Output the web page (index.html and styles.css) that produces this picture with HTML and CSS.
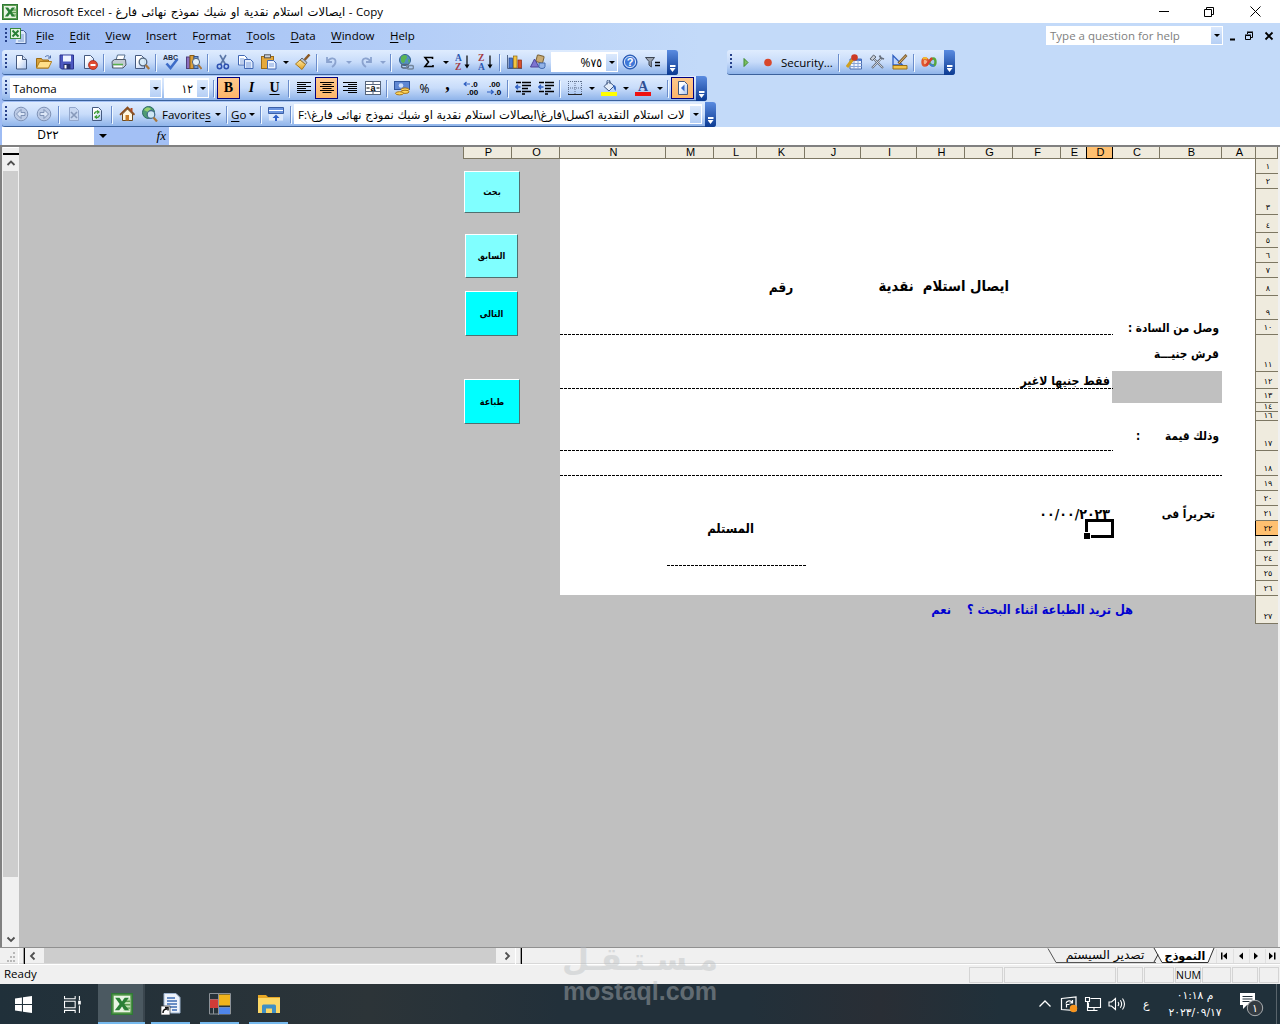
FILE: index.html
```
<!DOCTYPE html>
<html>
	<head>
		<meta charset="utf-8">
		<title>Microsoft Excel</title>
		<link rel="stylesheet" href="styles.css">
	</head>
	<body>

		<!-- icons -->
		<svg class="defs">
			<linearGradient id="paper" x1="0" y1="0" x2="1" y2="1"><stop offset="0.3" stop-color="#ffffff"/><stop offset="1" stop-color="#a9c4f0"/></linearGradient>
			<linearGradient id="gold" x1="0" y1="0" x2="0" y2="1"><stop offset="0" stop-color="#ffe9a0"/><stop offset="1" stop-color="#e0a020"/></linearGradient>
		</svg>
		<svg class="sprite">
			<symbol id="excel" viewBox="0 0 16 16"><rect x="0.5" y="0.5" width="15" height="15" fill="#5d9c50" stroke="#2f7a35"/><rect x="2" y="2" width="12" height="12" fill="#e9f4e4"/><path d="M9 4h5v9H9z" fill="#bfe0b5"/><path d="M9 6h5M9 8.500h5M9 11h5" stroke="#5d9c50"/><path d="M3 3.500h3.200l1.800 2.600 2-2.600h3L9.600 8l3.600 4.500H10L8 9.800l-2 2.700H2.800L6.300 8z" fill="#2a7f36"/></symbol>
			<symbol id="book" viewBox="0 0 17 16"><path d="M7.500 2.500h6l2.500 2.500v10.500H5.500" fill="#dce8fb" stroke="#3f5c94"/><path d="M10 7h4M10 9h4M10 11h4M8 13h6" stroke="#7b9bd0"/><rect x="0.500" y="0.500" width="10" height="10" fill="#e3f3de" stroke="#3b8a3c"/><path d="M2.500 2.500l6 6M8.500 2.500l-6 6" stroke="#2a7f36" stroke-width="2"/></symbol>
			<symbol id="new" viewBox="0 0 16 16"><path d="M3.500 1.500h6l4 4v9.500h-10z" fill="url(#paper)" stroke="#44597f"/><path d="M9.500 1.500v4h4" fill="#d5e2f7" stroke="#44597f"/></symbol>
			<symbol id="open" viewBox="0 0 16 16"><path d="M0.500 14V4.500h5l1 1.500h6v8z" fill="#d9a23a" stroke="#9a6b14"/><path d="M0.500 14l3.200-6.500h12L12.500 14z" fill="#ffe08a" stroke="#b07d1c"/><path d="M9 3c2-2 4-1.500 5 0.500M14.500 1.500v2.500H12" fill="none" stroke="#4a6ba8"/></symbol>
			<symbol id="save" viewBox="0 0 16 16"><path d="M1 1h13.500v14H2.500L1 13.500z" fill="#4c58c0" stroke="#2b3290"/><rect x="4" y="1.500" width="8" height="6" fill="#eef3ff"/><rect x="4.500" y="10" width="7" height="5" fill="#26306e"/><rect x="5.500" y="11" width="2" height="3.500" fill="#ffffff"/></symbol>
			<symbol id="perm" viewBox="0 0 16 16"><path d="M2.500 1.500h6l3 3v10h-9z" fill="url(#paper)" stroke="#44597f"/><circle cx="11" cy="11" r="4.500" fill="#e04a32" stroke="#9c2415" stroke-width="0.700"/><path d="M8.500 11h5" stroke="#fff" stroke-width="2"/></symbol>
			<symbol id="print" viewBox="0 0 16 16"><path d="M5 6l1.500-5H14l-1.500 5z" fill="#fff" stroke="#56708f"/><path d="M1 7.500L3.500 5.500h11L15 11l-3 3H1.500z" fill="#c3cbd4" stroke="#4f5a6a"/><path d="M2 10.500h10" stroke="#57b04a" stroke-width="1.500"/><path d="M3 12.500h8" stroke="#fff" stroke-width="1.500"/></symbol>
			<symbol id="preview" viewBox="0 0 16 16"><path d="M1.500 1.500h6l3 3v10h-9z" fill="url(#paper)" stroke="#44597f"/><circle cx="9" cy="8" r="3.800" fill="#d8ecfa" fill-opacity="0.900" stroke="#53677f" stroke-width="1.300"/><path d="M11.700 11l3.500 4" stroke="#a8763a" stroke-width="2.200"/></symbol>
			<symbol id="spell" viewBox="0 0 16 16"><text x="0" y="6" font-family="Liberation Sans" font-size="7" font-weight="bold" textLength="15" fill="#222c40">ABC</text><path d="M3.500 9.500l4 4.500L14.500 5" fill="none" stroke="#3d6cc8" stroke-width="2.600"/></symbol>
			<symbol id="research" viewBox="0 0 16 16"><rect x="0.500" y="3" width="3.500" height="11.500" fill="#8a6fc0" stroke="#50407c"/><rect x="4" y="1.500" width="4" height="13" fill="#d9a03c" stroke="#8a5c14"/><rect x="8" y="2.500" width="4" height="12" fill="#6f9ad6" stroke="#35548c"/><circle cx="10" cy="8" r="3.600" fill="#e3f1fb" stroke="#53677f"/><path d="M12.500 11l3 4" stroke="#a8763a" stroke-width="2"/></symbol>
			<symbol id="cut" viewBox="0 0 16 16"><path d="M5 1l5.500 9.500M11 1L5.500 10.500" stroke="#5c78a8" stroke-width="1.600"/><circle cx="4.500" cy="12.500" r="2.200" fill="none" stroke="#2c4fb0" stroke-width="1.500"/><circle cx="11.300" cy="12.500" r="2.200" fill="none" stroke="#2c4fb0" stroke-width="1.500"/></symbol>
			<symbol id="copy" viewBox="0 0 16 16"><path d="M0.500 1.500h6l2.500 2.500v7H0.500z" fill="#fff" stroke="#4268b4"/><path d="M6.500 5.500h6l2.500 2.500v6.500H6.500z" fill="#e2ecfc" stroke="#4268b4"/><path d="M2 5h4M2 7h4M2 9h4M8 9h5M8 11h5M8 13h5" stroke="#7fa0dc"/></symbol>
			<symbol id="paste" viewBox="0 0 16 16"><rect x="0.500" y="2.500" width="12" height="12" fill="#e5a93c" stroke="#9a6a17"/><rect x="3.500" y="0.800" width="6" height="3" fill="#cdd3dc" stroke="#555"/><path d="M6.500 6.500h6l2.500 2.500v6H6.500z" fill="#eef4ff" stroke="#4268b4"/><path d="M8 10h5M8 12h5" stroke="#7fa0dc"/></symbol>
			<symbol id="painter" viewBox="0 0 16 16"><path d="M14.500 0.500L9.500 6" stroke="#8b5a24" stroke-width="2.500"/><path d="M7 4l5 4.500-1.500 2L5 6z" fill="#b8bfca" stroke="#5f6b7c"/><path d="M5 6l5.500 4.500L7 15.500 0.500 10z" fill="url(#gold)" stroke="#a8791e"/></symbol>
			<symbol id="undo" viewBox="0 0 16 16"><path d="M3 3v5h5M3.500 7.500C6 3 12 3.500 11.500 8c0 2.500-2 4-3.500 5" fill="none" stroke="#8ba3cf" stroke-width="1.800"/></symbol>
			<symbol id="redo" viewBox="0 0 16 16"><path d="M13 3v5H8M12.500 7.500C10 3 4 3.500 4.500 8c0 2.500 2 4 3.500 5" fill="none" stroke="#8ba3cf" stroke-width="1.800"/></symbol>
			<symbol id="link" viewBox="0 0 16 16"><circle cx="7" cy="6" r="5.500" fill="#5390c0" stroke="#2f6090"/><path d="M3 3c3-3 6-2 6 0s-2 2-2 4-3 3-4 0zM10 5l2 1-1 4z" fill="#5ab551"/><rect x="3.500" y="10.500" width="7" height="3.500" rx="1.700" fill="none" stroke="#56677c" stroke-width="1.400"/><rect x="8.500" y="11.500" width="7" height="3.500" rx="1.700" fill="none" stroke="#74869c" stroke-width="1.400"/></symbol>
			<symbol id="sum" viewBox="0 0 16 16"><path d="M11.500 5V3.500H4l3.500 4.500L4 12.500h8V11" fill="none" stroke="#000" stroke-width="1.600"/></symbol>
			<symbol id="az" viewBox="0 0 16 16"><g font-family="Liberation Serif" font-size="9.500" font-weight="bold"><text x="0" y="7" fill="#2c57b0">A</text><text x="0" y="15.500" fill="#a33a44">Z</text></g><path d="M12 1.500v11" stroke="#000" stroke-width="1.200"/><path d="M9.500 10.500h5L12 14.500z"/></symbol>
			<symbol id="za" viewBox="0 0 16 16"><g font-family="Liberation Serif" font-size="9.500" font-weight="bold"><text x="0" y="7" fill="#a33a44">Z</text><text x="0" y="15.500" fill="#2c57b0">A</text></g><path d="M12 1.500v11" stroke="#000" stroke-width="1.200"/><path d="M9.500 10.500h5L12 14.500z"/></symbol>
			<symbol id="chart" viewBox="0 0 16 16"><path d="M0.500 1v13.500H15" fill="none" stroke="#50658a"/><rect x="2" y="4" width="3.500" height="10" fill="#4a78d0" stroke="#26468a" stroke-width="0.700"/><rect x="6.500" y="2" width="3.500" height="12" fill="#f4c440" stroke="#8f6810" stroke-width="0.700"/><rect x="11" y="6" width="3.500" height="8" fill="#d8502c" stroke="#8c2810" stroke-width="0.700"/></symbol>
			<symbol id="draw" viewBox="0 0 16 16"><rect x="6.500" y="1.500" width="7" height="7" rx="1" fill="#c8aa74" stroke="#7a6237" transform="rotate(15 10 5)"/><path d="M0.500 13L4.500 5l4.500 8z" fill="#7d74d0" stroke="#4c4398"/><path d="M9 9h6v3.500a3 2 0 0 1-6 0z" fill="#93b3e8" stroke="#456cb0"/></symbol>
			<symbol id="help" viewBox="0 0 16 16"><circle cx="8" cy="8" r="7" fill="#3f78d8" stroke="#1f4fa8"/><circle cx="8" cy="8" r="5.600" fill="none" stroke="#fff" stroke-width="0.800"/><text x="8" y="12" text-anchor="middle" font-family="Liberation Sans" font-size="11" font-weight="bold" fill="#fff">?</text></symbol>
			<symbol id="filter" viewBox="0 0 16 16"><path d="M0.500 3.500h9L6.300 7.500V13L4 11V7.500z" fill="#9aa2ae" stroke="#3b4350"/><path d="M10 8.500h5M10 11.500h5" stroke="#000" stroke-width="1.500"/></symbol>
			<symbol id="left" viewBox="0 0 16 16"><path d="M1 2.500h14M1 4.500h9M1 6.500h14M1 8.500h9M1 10.500h14M1 12.500h9" stroke="#000"/></symbol>
			<symbol id="center" viewBox="0 0 16 16"><path d="M1 2.500h14M3.500 4.500h9M1 6.500h14M3.500 8.500h9M1 10.500h14M3.500 12.500h9" stroke="#000"/></symbol>
			<symbol id="right" viewBox="0 0 16 16"><path d="M1 2.500h14M6 4.500h9M1 6.500h14M6 8.500h9M1 10.500h14M6 12.500h9" stroke="#000"/></symbol>
			<symbol id="merge" viewBox="0 0 16 16"><rect x="0.500" y="1.500" width="15" height="13" fill="#fff" stroke="#56657c"/><path d="M0.500 4.500h15M0.500 11.500h15M8 1.500v3M8 11.500v3" stroke="#56657c"/><text x="8" y="10.500" text-anchor="middle" font-family="Liberation Sans" font-size="9" font-weight="bold">a</text><path d="M1.500 8h3M11.500 8h3" stroke="#000"/></symbol>
			<symbol id="money" viewBox="0 0 16 16"><rect x="0.500" y="1.500" width="15" height="8" fill="#5f88d4" stroke="#2f559c"/><circle cx="7" cy="5.500" r="2.300" fill="#cfe0fa"/><ellipse cx="11" cy="9.500" rx="4" ry="1.600" fill="#ffd75a" stroke="#a8741a"/><ellipse cx="11" cy="11.800" rx="4" ry="1.600" fill="#ffd75a" stroke="#a8741a"/><ellipse cx="5.500" cy="13.300" rx="4" ry="1.600" fill="#ffd75a" stroke="#a8741a"/></symbol>
			<symbol id="incdec" viewBox="0 0 16 16"><g font-family="Liberation Sans" font-size="8"><text x="8" y="7">.0</text><text x="4" y="15">.00</text></g><path d="M7 4H1.500M3.500 2L1.200 4l2.300 2" fill="none" stroke="#2f5fc0" stroke-width="1.200"/></symbol>
			<symbol id="decdec" viewBox="0 0 16 16"><g font-family="Liberation Sans" font-size="8"><text x="3" y="7">.00</text><text x="8.500" y="15">.0</text></g><path d="M1 12h6M5 10l2.300 2L5 14" fill="none" stroke="#2f5fc0" stroke-width="1.200"/></symbol>
			<symbol id="outdent" viewBox="0 0 16 16"><path d="M1 2.500h5M7 2.500h9M7 5.500h9M7 8.500h6M1 11.500h5M7 11.500h9M7 14h3" stroke="#000" stroke-width="1.400"/><path d="M5.500 7H1M3 4.800L0.800 7 3 9.200" fill="none" stroke="#2f5fc0" stroke-width="1.400"/></symbol>
			<symbol id="grid" viewBox="0 0 16 16"><path d="M1.500 1v13M8 1v13M14.500 1v13M1 1.500h14M1 8h14" stroke="#5e6f8c" stroke-dasharray="1 1"/><path d="M1 14.500h14" stroke="#222"/></symbol>
			<symbol id="fill" viewBox="0 0 16 16"><path d="M3 6.500L8 1.500l5 4.500-5 5z" fill="#e4edf9" stroke="#3f5782"/><path d="M6 4.500V1.500a1.500 1.500 0 0 1 3 0V4" fill="none" stroke="#3f5782"/><path d="M12 5c3 0 3.500 3 2.500 6-1-1-2-3-2.500-6z" fill="#3264c0"/><path d="M0 12h16v4H0z" fill="#ffff00"/></symbol>
			<symbol id="color" viewBox="0 0 16 16"><text x="8" y="11" text-anchor="middle" font-family="Liberation Serif" font-size="14" font-weight="bold" fill="#2f4f94">A</text><path d="M0 12h16v4H0z" fill="#ee1111"/></symbol>
			<symbol id="rtl" viewBox="0 0 16 16"><path d="M3.500 1.500h6l3 3v10h-9z" fill="url(#paper)" stroke="#44597f"/><path d="M9.500 4.500L6 8l3.500 3.500z" fill="#3568c8"/></symbol>
			<symbol id="back" viewBox="0 0 16 16"><circle cx="8" cy="8" r="6.800" fill="#bccbe6" stroke="#7f92b6"/><path d="M12 6.500H8V3.500L3.500 8 8 12.500v-3h4z" fill="#dbe6f7" stroke="#7f92b6"/></symbol>
			<symbol id="fwd" viewBox="0 0 16 16"><circle cx="8" cy="8" r="6.800" fill="#bccbe6" stroke="#7f92b6"/><path d="M4 6.500h4V3.500L12.500 8 8 12.500v-3H4z" fill="#dbe6f7" stroke="#7f92b6"/></symbol>
			<symbol id="stop" viewBox="0 0 16 16"><path d="M3.500 1.500h6l3 3v10h-9z" fill="#c6d6f0" stroke="#93a7cc"/><path d="M5 6l6 6M11 6l-6 6" stroke="#8799ba" stroke-width="1.600"/></symbol>
			<symbol id="refresh" viewBox="0 0 16 16"><path d="M3.500 1.500h6l3 3v10h-9z" fill="url(#paper)" stroke="#44597f"/><path d="M5.500 8c0-2 2-3 4-2M8 4.500l2 1.500-2 1.500M10.500 9c0 2-2 3-4 2M8 9.500L6 11l2 1.500" fill="none" stroke="#3b9a32" stroke-width="1.200"/></symbol>
			<symbol id="home" viewBox="0 0 16 16"><path d="M3.500 8v6.500h10V8L8.500 3z" fill="#fff6e0" stroke="#6b4a20"/><path d="M1 8.800L8.500 1.500 15.500 8.800" fill="none" stroke="#8a4c1c" stroke-width="1.800"/><path d="M12.500 2v3.500" stroke="#b04a20" stroke-width="2"/><path d="M6.500 9h3.500v5.500H6.500z" fill="#c87c28"/></symbol>
			<symbol id="web" viewBox="0 0 16 16"><circle cx="6.500" cy="6.500" r="6" fill="#4f9b72" stroke="#2c6a64"/><path d="M2 4c3-4 6-2 7-1L6 6z" fill="#96d070"/><circle cx="9" cy="8.500" r="3.800" fill="#cfe7f4" stroke="#406888" stroke-width="1.200"/><path d="M11.500 11.500L15 15.500" stroke="#a8763a" stroke-width="2.200"/></symbol>
			<symbol id="bars" viewBox="0 0 16 16"><path d="M0.500 1.500h15v6h-15z" fill="#6c95e0" stroke="#3c60a8"/><path d="M1 4.500h14" stroke="#fff"/><path d="M1 8h14v6.500H1z" fill="#dfeafb"/><path d="M8 8.500L4.500 12H7v3h2v-3h2.500z" fill="#2f5fc8"/></symbol>
			<symbol id="sheetpin" viewBox="0 0 16 16"><path d="M4 5h11.500v10H4z" fill="#f0f5ff" stroke="#4a6cae"/><path d="M4 6h11.500" stroke="#4a78d0" stroke-width="2"/><path d="M4 9.500h11.500M4 12.500h11.500M8 6v9M12 6v9" stroke="#88a4d8"/><path d="M7 5L1 13" stroke="#d0a020" stroke-width="3"/><circle cx="8.500" cy="3.500" r="3.300" fill="#cc3a24"/></symbol>
			<symbol id="tools" viewBox="0 0 16 16"><path d="M3 3l11 11M12.500 4L3 14" stroke="#68707e" stroke-width="2.200"/><path d="M3.500 3.500l10 10M12 5l-8.500 8.500" stroke="#e3e7ee" stroke-width="0.800"/><path d="M1 5L4.500 1 7 3 3.500 6.500z" fill="#c6ccd6" stroke="#5b6470"/><path d="M10.500 1.500L12 4l3 1" fill="none" stroke="#68707e" stroke-width="1.800"/></symbol>
			<symbol id="design" viewBox="0 0 16 16"><path d="M1 1.500v9.500h9.500z" fill="#bcd3fa" stroke="#2f5fc0" stroke-width="1.300"/><path d="M14.500 1L6.500 9.500" stroke="#7c5a2c" stroke-width="2.600"/><path d="M14 1.500L7 9" stroke="#e4c07c"/><path d="M1 11.500h14v3.500H1z" fill="#f2c24a" stroke="#98701a"/></symbol>
			<symbol id="script" viewBox="0 0 16 16"><path d="M8 8C5.500 3 1.500 3.500 1.500 8s4 5 6.500 0" fill="#f3b08c" stroke="#e0562c" stroke-width="2.400"/><path d="M8 8c2.500-5 6.500-4.500 6.500 0s-4 5-6.500 0" fill="#a8c8f4" stroke="#56a83c" stroke-width="2.400"/><path d="M5 11.500L11 4" stroke="#d8402c" stroke-width="2.400"/><path d="M9 10q2 2.500 4 1.500" fill="none" stroke="#3f78d8" stroke-width="2"/><path d="M2 5q2-2 4 0" fill="none" stroke="#f0bc2c" stroke-width="2"/></symbol>
		</svg>

		<div class="titlebar">
			<svg class="icon"><use href="#excel"/></svg>
			<span class="title">Microsoft Excel - <span class="ar">ايصالات استلام نقدية او شيك نموذج نهائى فارغ</span> - Copy</span>
			<svg class="winbuttons" viewBox="0 0 136 22"><path d="M15 10.500h10M60.500 8.500h7v7h-7zM62.500 8V6.500h7v7H68M106.500 5.500l10 10M116.500 5.500l-10 10" fill="none" stroke="#000"/></svg>
		</div>

		<div class="commands">
			<div class="menubar">
				<i class="grip"></i>
				<svg class="bookicon"><use href="#book"/></svg>
				<ul class="menu">
					<li><u>F</u>ile</li><li><u>E</u>dit</li><li><u>V</u>iew</li><li><u>I</u>nsert</li><li>F<u>o</u>rmat</li><li><u>T</u>ools</li><li><u>D</u>ata</li><li><u>W</u>indow</li><li><u>H</u>elp</li>
				</ul>
				<div class="question">Type a question for help<i class="drop"></i></div>
				<svg class="docbuttons" viewBox="0 0 48 16"><path d="M2 11.500h5" stroke="#000" stroke-width="2"/><path d="M17.500 7.500h5v4h-5zM19.500 6V4.500h5v5H23M17 7h6M19 4h6" fill="none" stroke="#000"/><path d="M37.500 4.500l7 7M44.500 4.500l-7 7" stroke="#000" stroke-width="1.800"/></svg>
			</div>

			<div class="bars">
				<div class="toolbar standard">
					<i class="grip"></i>
					<b class="btn"><svg><use href="#new"/></svg></b>
					<b class="btn"><svg><use href="#open"/></svg></b>
					<b class="btn"><svg><use href="#save"/></svg></b>
					<b class="btn"><svg><use href="#perm"/></svg></b>
					<i class="sep"></i>
					<b class="btn"><svg><use href="#print"/></svg></b>
					<b class="btn"><svg><use href="#preview"/></svg></b>
					<i class="sep"></i>
					<b class="btn"><svg><use href="#spell"/></svg></b>
					<b class="btn"><svg><use href="#research"/></svg></b>
					<i class="sep"></i>
					<b class="btn"><svg><use href="#cut"/></svg></b>
					<b class="btn"><svg><use href="#copy"/></svg></b>
					<b class="btn"><svg><use href="#paste"/></svg></b>
					<i class="arrow"></i>
					<b class="btn"><svg><use href="#painter"/></svg></b>
					<i class="sep"></i>
					<b class="btn"><svg><use href="#undo"/></svg></b>
					<i class="arrow off"></i>
					<b class="btn"><svg><use href="#redo"/></svg></b>
					<i class="arrow off"></i>
					<i class="sep"></i>
					<b class="btn"><svg><use href="#link"/></svg></b>
					<b class="btn"><svg><use href="#sum"/></svg></b>
					<i class="arrow"></i>
					<b class="btn"><svg><use href="#az"/></svg></b>
					<b class="btn"><svg><use href="#za"/></svg></b>
					<i class="sep"></i>
					<b class="btn"><svg><use href="#chart"/></svg></b>
					<b class="btn"><svg><use href="#draw"/></svg></b>
					<div class="combo zoom"><span>%٧٥</span><i class="drop"></i></div>
					<b class="btn"><svg><use href="#help"/></svg></b>
					<b class="btn"><svg><use href="#filter"/></svg></b>
					<i class="cap"></i>
				</div>

				<div class="toolbar macros">
					<i class="grip"></i>
					<b class="btn"><svg viewBox="0 0 16 16"><path d="M6 4.500l4 4-4 4z" fill="#7cc060" stroke="#3f8a30"/></svg></b>
					<b class="btn"><svg viewBox="0 0 16 16"><circle cx="7" cy="8.500" r="3.800" fill="#d8472c"/></svg></b>
					<span class="label security">Security...</span>
					<i class="sep"></i>
					<b class="btn"><svg><use href="#sheetpin"/></svg></b>
					<b class="btn"><svg><use href="#tools"/></svg></b>
					<b class="btn"><svg><use href="#design"/></svg></b>
					<i class="sep"></i>
					<b class="btn"><svg><use href="#script"/></svg></b>
					<i class="cap"></i>
				</div>
			</div>

			<div class="toolbar formatting">
				<i class="grip"></i>
				<div class="combo fontname"><span>Tahoma</span><i class="drop"></i></div>
				<div class="combo fontsize"><span>١٢</span><i class="drop"></i></div>
				<i class="sep"></i>
				<b class="btn on letter">B</b>
				<b class="btn letter italic">I</b>
				<b class="btn letter"><u>U</u></b>
				<i class="sep"></i>
				<b class="btn"><svg><use href="#left"/></svg></b>
				<b class="btn on"><svg><use href="#center"/></svg></b>
				<b class="btn"><svg><use href="#right"/></svg></b>
				<b class="btn"><svg><use href="#merge"/></svg></b>
				<i class="sep"></i>
				<b class="btn"><svg><use href="#money"/></svg></b>
				<b class="btn percent">%</b>
				<b class="btn comma">,</b>
				<b class="btn"><svg><use href="#incdec"/></svg></b>
				<b class="btn"><svg><use href="#decdec"/></svg></b>
				<i class="sep"></i>
				<b class="btn"><svg><use href="#outdent"/></svg></b>
				<b class="btn"><svg><use href="#outdent"/></svg></b>
				<i class="sep"></i>
				<b class="btn"><svg><use href="#grid"/></svg></b>
				<i class="arrow"></i>
				<b class="btn"><svg><use href="#fill"/></svg></b>
				<i class="arrow"></i>
				<b class="btn"><svg><use href="#color"/></svg></b>
				<i class="arrow"></i>
				<i class="sep"></i>
				<b class="btn on"><svg><use href="#rtl"/></svg></b>
				<i class="cap"></i>
			</div>

			<div class="toolbar web">
				<i class="grip"></i>
				<b class="btn"><svg><use href="#back"/></svg></b>
				<b class="btn"><svg><use href="#fwd"/></svg></b>
				<i class="sep"></i>
				<b class="btn"><svg><use href="#stop"/></svg></b>
				<b class="btn"><svg><use href="#refresh"/></svg></b>
				<i class="sep"></i>
				<b class="btn"><svg><use href="#home"/></svg></b>
				<b class="btn"><svg><use href="#web"/></svg></b>
				<span class="label favorites">Favorite<u>s</u></span>
				<i class="arrow"></i>
				<i class="sep"></i>
				<span class="label go"><u>G</u>o</span>
				<i class="arrow"></i>
				<i class="sep"></i>
				<b class="btn"><svg><use href="#bars"/></svg></b>
				<i class="sep"></i>
				<div class="combo address"><span>F:\<span class="ar">لات استلام النقدية اكسل\فارغ\ايصالات استلام نقدية او شيك نموذج نهائى فارغ</span></span><i class="drop"></i></div>
				<i class="cap"></i>
			</div>
		</div>

		<div class="formula">
			<span class="cellname">D٢٢</span>
			<span class="fx"><i class="arrow"></i><em>fx</em></span>
		</div>

		<div class="main">
			<div class="vscroll">
				<i class="split"></i>
				<svg class="chev" viewBox="0 0 16 16"><path d="M4.500 10L8 6.500l3.500 3.500" /></svg>
				<i class="thumb"></i>
				<svg class="chev" viewBox="0 0 16 16"><path d="M4.500 6.500L8 10l3.500-3.500" /></svg>
			</div>

			<div class="sheet">
				<div class="colheads">
					<span>P</span><span>O</span><span>N</span><span>M</span><span>L</span><span>K</span><span>J</span><span>I</span><span>H</span><span>G</span><span>F</span><span>E</span><span class="current">D</span><span>C</span><span>B</span><span>A</span><span></span>
				</div>
				<div class="rowheads">
					<span>١</span><span>٢</span><span>٣</span><span>٤</span><span>٥</span><span>٦</span><span>٧</span><span>٨</span><span>٩</span><span>١٠</span><span>١١</span><span>١٢</span><span>١٣</span><span class="tight">١٤</span><span class="tight">١٦</span><span>١٧</span><span>١٨</span><span>١٩</span><span>٢٠</span><span>٢١</span><span class="current">٢٢</span><span>٢٣</span><span>٢٤</span><span>٢٥</span><span>٢٦</span><span>٢٧</span>
				</div>

				<div class="page"></div>
				<div class="amount"></div>

				<div class="buttons">
					<div class="push wide search">بحث</div>
					<div class="push prev">السابق</div>
					<div class="push bright next">التالى</div>
					<div class="push wide bright printing">طباعة</div>
				</div>

				<div class="cell heading">ايصال استلام&nbsp; نقدية</div>
				<div class="cell number">رقم</div>
				<div class="cell from">وصل من السادة :</div>
				<div class="cell currency">قرش جنيـــة</div>
				<div class="cell only">فقط جنيها لاغير</div>
				<div class="cell value">وذلك قيمة</div>
				<div class="cell colon">:</div>
				<div class="cell written">تحريراً فى</div>
				<div class="cell date">٠٠/٠٠/٢٠٢٣</div>
				<div class="cell receiver">المستلم</div>
				<div class="cell ask">هل تريد الطباعة اثناء البحث ؟</div>
				<div class="cell yes">نعم</div>

				<div class="line line1"></div>
				<div class="line line2"></div>
				<div class="line line3"></div>
				<div class="line line4"></div>
				<div class="line line5"></div>
				<div class="selected"></div>
			</div>
		</div>

		<div class="tabbar">
			<svg class="corner" viewBox="0 0 16 16"><path d="M11 4h2v2h-2zM8 8h2v2H8zM11 8h2v2h-2zM5 12h2v2H5zM8 12h2v2H8zM11 12h2v2h-2z" fill="#b8b8b8"/></svg>
			<i class="vsplit"></i>
			<svg class="chev" viewBox="0 0 16 16"><path d="M9.500 4.500L6 8l3.500 3.500"/></svg>
			<i class="hthumb"></i>
			<svg class="chev" viewBox="0 0 16 16"><path d="M6.500 4.500L10 8l-3.500 3.500"/></svg>
			<i class="vsplit"></i>
			<div class="tabs">
				<svg class="tabshape" viewBox="0 0 170 16"><path d="M2 0.500l8 14h100" fill="none" stroke="#555"/><path d="M108 0l8 14.500h46L168 0z" fill="#fff"/><path d="M108 14l4-7.500M108 0l8 14.500h46L168 0" fill="none" stroke="#333"/></svg>
				<span class="tab other">تصدير السيستم</span>
				<span class="tab active">النموذج</span>
			</div>
			<svg class="tabnav" viewBox="0 0 64 16"><path d="M0.500 1v14M17.500 1v14M33.500 1v14M49.500 1v14" stroke="#e0e0e0"/><path d="M5 4.500h1.500v7H5zM11 4.500v7L7 8zM27 4.500v7L23 8zM38 4.500v7L42 8zM53 4.500v7L57 8zM58 4.500h1.500v7H58z"/></svg>
		</div>

		<div class="status">
			<span class="ready">Ready</span>
			<span></span><span></span><span></span><span></span><span>NUM</span><span></span><span></span><span></span>
		</div>

		<div class="taskbar">
			<div class="task"><svg viewBox="0 0 16 16"><path d="M0 2.300l6.500-0.900v6.100H0zM7.500 1.200L16 0v7.500H7.500zM0 8.500h6.500v6.100L0 13.700zM7.500 8.500H16V16l-8.500-1.200z" fill="#fff"/></svg></div>
			<div class="task"><svg viewBox="0 0 16 16"><path d="M0.500 0v2.500h10V0M0.500 16v-2.500h10V16M0.500 5h10v6h-10zM14.500 0v4M14.500 9v7" fill="none" stroke="#fff"/><path d="M13.300 4.500h2.500V8h-2.500z" fill="#fff"/></svg></div>
			<div class="task open focus"><svg class="big"><use href="#excel"/></svg></div>
			<div class="task open"><svg class="big" viewBox="0 0 22 22"><path d="M4 0.500h12l4 4V20H4z" fill="#eef3fb" stroke="#9db3cf"/><path d="M7 5h8M7 8h10M7 11h10M10 14h7M12 17h5" stroke="#3c6cb4" stroke-width="1.300"/><rect x="1" y="13" width="9" height="9" fill="#fff" stroke="#333" stroke-width="0.700"/><path d="M3 20c0-3 1-4 4-4M5 14.500h3v3" fill="none" stroke="#111" stroke-width="1.500"/></svg></div>
			<div class="task open"><svg class="big" viewBox="0 0 22 22"><path d="M0.500 0.500h21v20.500H0.500zM9.500 0v22M0 6.500h9M0 14.500h22M4.500 14v7" fill="none" stroke="#8c9298"/><rect x="10" y="1.500" width="11" height="11" fill="#f0b41c"/><rect x="1" y="6.500" width="8" height="8.500" fill="#d03c38"/><rect x="10" y="14.500" width="11" height="6.500" fill="#4f86ea"/></svg></div>
			<div class="task open"><svg class="big" viewBox="0 0 22 22"><path d="M0 2h8l2 2h12v3H0z" fill="#e8a825"/><path d="M0 5h22v15H0z" fill="#fbd766"/><path d="M4 20v-7q0-1.500 1.500-1.500h11Q18 11.500 18 13v7h-4v-4.500H8V20z" fill="#3f8fc4"/></svg></div>
			<div class="tray">
				<svg class="trayicon" viewBox="0 0 18 18"><path d="M3.500 11.500L9 6l5.500 5.500" fill="none" stroke="#fff" stroke-width="1.300"/></svg>
				<svg class="trayicon" viewBox="0 0 18 18"><path d="M1.500 3.500L16 2v13.500l-14.500-1z" fill="none" stroke="#fff" stroke-width="1.200"/><path d="M6 8.500c0.500-3 5-3.500 6-1M12.500 5v3h-3M6.500 12.500V9.500h3" fill="none" stroke="#fff" stroke-width="1.200"/><circle cx="13.500" cy="13.500" r="3.700" fill="#f7941d"/></svg>
				<svg class="trayicon" viewBox="0 0 18 18"><path d="M4.500 7.500v5h12v-9H6.500M10 12.500v3M6.500 15.500h7M1.500 2.500h4v4h-4zM3.500 6.500v9h3" fill="none" stroke="#fff" stroke-width="1.100"/></svg>
				<svg class="trayicon" viewBox="0 0 18 18"><path d="M1 7h2.500l4-3.500v11l-4-3.500H1zM10 7q1.500 2 0 4M12.300 5.300q2.700 3.700 0 7.400M14.500 3.500q4 5.500 0 11" fill="none" stroke="#fff" stroke-width="1.100"/></svg>
				<span class="lang">ع</span>
				<div class="clock"><span>م ٠١:١٨</span><span>٢٠٢٣/٠٩/١٧</span></div>
				<svg class="notify" viewBox="0 0 30 30"><path d="M3 4h15v12h-8l-4 4v-4H3z" fill="#fff"/><path d="M5.500 7.500h10M5.500 10h10M5.500 12.500h7" stroke="#22303a"/><circle cx="18" cy="19" r="7.700" fill="#343b41" stroke="#a9adb0"/><text x="18" y="23" text-anchor="middle" font-family="DejaVu Sans" font-size="11" fill="#fff">١</text></svg>
			</div>
		</div>

		<div class="watermark">
			<span class="brand">مـسـتـقـل</span>
			<span class="domain">mostaql.com</span>
		</div>
	</body>
</html>
```

FILE: styles.css
```
* {
	box-sizing: border-box;
}

body {
	margin: 0;
	width: 1280px;
	height: 1024px;
	overflow: hidden;
	position: relative;
	display: flex;
	flex-direction: column;
	background-color: #f0f0f0;
	font-family: "Open Sans", "DejaVu Sans", sans-serif;
	font-size: 11.5px;
	color: #000000;
	white-space: nowrap;
}

i, b, em {
	font-style: normal;
	flex: none;
}

svg {
	flex: none;
	display: block;
}

.defs {
	position: absolute;
	width: 0;
	height: 0;
}

.sprite {
	display: none;
}

.ar {
	font-family: "DejaVu Sans";
	font-size: 11.6px;
}

/* title bar */

.titlebar {
	height: 23px;
	background-color: #ffffff;
	display: flex;
	align-items: center;
	padding-left: 2px;
}

.icon {
	width: 16px;
	height: 16px;
}

.title {
	margin-left: 5px;
	flex: 1;
	word-spacing: 0.6px;
}

.winbuttons {
	width: 136px;
	height: 22px;
}

/* menu and toolbars */

.commands {
	height: 104px;
	background: linear-gradient(to right, #9ebcf4, #c3daf9 700px);
	padding-left: 2px;
}

.menubar {
	height: 27px;
	padding-bottom: 2px;
	display: flex;
	align-items: center;
}

.menu {
	display: flex;
	gap: 15.4px;
	list-style: none;
	margin: 0 0 0 9px;
	padding: 0;
	flex: 1;
}

u {
	text-underline-offset: 2px;
}

.bookicon {
	width: 17px;
	height: 16px;
	margin-left: 1px;
}

.question {
	width: 177px;
	height: 19px;
	background-color: #ffffff;
	color: #808080;
	padding-left: 3px;
	display: flex;
	align-items: center;
	justify-content: space-between;
	border: 1px solid #ffffff;
}

.docbuttons {
	width: 48px;
	height: 16px;
	margin: 0 4px 0 5px;
}

.bars {
	display: flex;
	gap: 49px;
}

.toolbar {
	height: 25px;
	margin-bottom: 1px;
	display: flex;
	align-items: center;
	background: linear-gradient(#dfecfe, #c8dcfa 50%, #8fb4ea);
	border-bottom: 1px solid #3b619c;
	border-radius: 3px;
	position: relative;
}

.standard { width: 676px; }
.macros { width: 228px; }
.formatting { width: 705px; }
.web { width: 714px; }

.grip {
	width: 2px;
	height: 16px;
	margin: 0 2px 0 3px;
	background: repeating-linear-gradient(#27418a 0 2px, transparent 2px 4px);
}

.btn {
	width: 23px;
	height: 22px;
	display: flex;
	align-items: center;
	justify-content: center;
}

.btn svg {
	width: 16px;
	height: 16px;
}

.on {
	background: linear-gradient(#ffc98c, #fdb56a);
	border: 1px solid #000080;
}

.letter {
	font: bold 14px "Liberation Serif", serif;
}

.italic {
	font-style: italic;
}

.percent {
	font-weight: normal;
	font-size: 12px;
}

.comma {
	font: bold 18px "Liberation Serif", serif;
	padding-bottom: 7px;
}

.sep {
	width: 1px;
	height: 17px;
	margin: 0 3px 0 2px;
	background-color: #6a8ccb;
	box-shadow: 1px 1px 0 #f1f9ff;
}

.arrow {
	width: 11px;
	display: flex;
	justify-content: center;
}

.arrow::after, .drop::after {
	content: "";
	border: 3px solid transparent;
	border-top-color: #000000;
	border-bottom: 0;
}

.off::after {
	border-top-color: #8ba3cf;
}

.combo {
	height: 20px;
	background-color: #ffffff;
	display: flex;
	justify-content: space-between;
	align-items: center;
	padding: 1px 1px 1px 3px;
	flex: none;
	overflow: hidden;
}

.drop {
	width: 11px;
	height: 17px;
	background: linear-gradient(#dbe9fd, #b5cff5);
	display: flex;
	align-items: center;
	justify-content: center;
}

.zoom {
	width: 67px;
	margin: 0 0 0 2px;
}

.fontname {
	width: 152px;
	margin: 0 2px 0 1px;
}

.fontsize {
	width: 45px;
	margin-right: 2px;
}

.zoom span, .fontsize span {
	flex: 1;
	text-align: right;
	padding-right: 4px;
	font-family: "Open Sans", "DejaVu Sans Condensed", "DejaVu Sans";
	font-size: 12px;
}

.address {
	width: 408px;
	padding-left: 4px;
}

.cap {
	width: 11px;
	height: 25px;
	margin-left: auto;
	align-self: flex-start;
	background: linear-gradient(#5a8be0, #0b3a92);
	border-radius: 0 3px 3px 0;
	display: flex;
	align-items: flex-end;
	justify-content: center;
	padding-bottom: 3px;
}

.cap::after {
	content: "";
	width: 6px;
	height: 7px;
	background: linear-gradient(#ffffff 2px, transparent 2px 3px, #ffffff 3px);
	clip-path: polygon(0 0, 100% 0, 100% 3px, 50% 100%, 0 3px);
}

.security {
	width: 51px;
	margin: 0 4px 0 1px;
}

.favorites {
	width: 50px;
	margin: 0 0 0 1px;
}

.go {
	width: 16px;
	margin-left: 1px;
}

.web .sep {
	margin: 0 3px;
}

.web .go + .arrow {
	width: 10px;
}

.formula {
	height: 18px;
	background-color: #ffffff;
	display: flex;
}

.cellname {
	width: 94px;
	text-align: center;
	border-left: 2px solid #9ebcf4;
	line-height: 16px;
	font-size: 12px;
}

.fx {
	width: 75px;
	height: 18px;
	background-color: #a3c0f5;
	display: flex;
	align-items: center;
	justify-content: space-between;
	padding: 0 3px 0 3px;
}

.fx .arrow::after {
	border-width: 4px;
	border-bottom: 0;
}

.fx em {
	font: italic 13px "Liberation Serif", serif;
}

/* worksheet */

.main {
	height: 802px;
	display: flex;
	border-top: 2px solid #808080;
	padding-right: 2px;
}

.vscroll {
	width: 19px;
	border-left: 2px solid #808080;
	background-color: #f0f0f0;
	display: flex;
	flex-direction: column;
	align-items: center;
}

.split {
	width: 16px;
	height: 8px;
	border-bottom: 2px solid #000000;
	border-top: 1px solid #ffffff;
}

.chev {
	width: 16px;
	height: 16px;
}

.chev path {
	fill: none;
	stroke: #505050;
	stroke-width: 1.8;
}

.thumb {
	width: 15px;
	height: 706px;
	background-color: #cdcdcd;
	margin-bottom: 54px;
}

.sheet {
	flex: 1;
	display: grid;
	background-color: #c0c0c0;
	grid-template-columns: 444px 49px 48px 106px 48px 43px 48px 56px 56px 48px 48px 48px 26px 26px 47px 62px 34px 22px;
	grid-template-rows: 12px 15px 15px 26px 18px 15px 15px 15px 18px 24px 15px 37px 17px 14px 9px 9px 30px 25px 15px 15px 15px 15px 15px 15px 15px 15px 28px;
}

.colheads {
	grid-area: 1 / 2 / 2 / 19;
	display: grid;
	grid-template-columns: subgrid;
	grid-template-rows: 12px;
}

.colheads span {
	background-color: #efebde;
	border-right: 1px solid #7d7763;
	border-bottom: 1px solid #7d7763;
	font: 11px/11px "Liberation Sans", sans-serif;
	text-align: center;
	padding-left: 2px;
}

.colheads span:first-child {
	border-left: 1px solid #7d7763;
}

.colheads .current {
	background-color: #ffc070;
	border-color: #000000;
	box-shadow: -1px 0 0 #000000;
}

.rowheads {
	grid-area: 2 / 18 / 28 / 19;
	display: grid;
	grid-template-rows: subgrid;
	margin-left: -1px;
}

.rowheads span {
	background-color: #efebde;
	border-left: 1px solid #7d7763;
	border-bottom: 1px solid #7d7763;
	font: 8px/12px "DejaVu Sans", sans-serif;
	display: flex;
	align-items: flex-end;
	justify-content: center;
	overflow: hidden;
	padding-left: 2px;
}

.rowheads .tight {
	line-height: 8px;
}

.rowheads .current {
	background-color: #ffc070;
	border-color: #000000;
}

.page {
	grid-area: 2 / 4 / 27 / 18;
	background-color: #ffffff;
	margin-right: 1px;
	margin-bottom: 1px;
}

.amount {
	grid-area: 13 / 15 / 15 / 17;
	background-color: #c0c0c0;
	margin: -1px 0 0 -1px;
}

.buttons {
	grid-area: 2 / 2 / 28 / 4;
	display: flex;
	flex-direction: column;
	padding: 12px 0 0 1px;
}

.push {
	width: 53px;
	height: 44px;
	margin-left: 1px;
	background-color: #80ffff;
	border: 1px solid #ffffff;
	border-right: 1px solid #4f7070;
	border-bottom: 1px solid #4f7070;
	display: flex;
	align-items: center;
	justify-content: center;
	font: bold 9px "DejaVu Sans Condensed", "DejaVu Sans", sans-serif;
}

.wide {
	width: 56px;
	margin-left: 0;
}

.bright {
	background-color: #00ffff;
}

.search { height: 42px; }
.prev { margin-top: 21px; }
.next { margin-top: 13px; height: 45px; }
.printing { margin-top: 43px; height: 45px; }

.cell {
	direction: rtl;
	font: bold 11.7px "DejaVu Sans Condensed", "DejaVu Sans", sans-serif;
	align-self: center;
	justify-self: end;
	line-height: 14px;
}

.heading {
	grid-area: 9 / 8 / 10 / 12;
	font-size: 14.700px;
	padding-right: 4px;
	padding-bottom: 2px;
}

.number {
	grid-area: 9 / 7 / 10 / 8;
	font-size: 13.500px;
	justify-self: center;
}

.from {
	grid-area: 11 / 15 / 12 / 17;
	padding-right: 3px;
}

.currency {
	grid-area: 12 / 15 / 13 / 17;
	padding-right: 3px;
}

.only {
	grid-area: 13 / 12 / 14 / 15;
	font-size: 12.2px;
	padding-right: 3px;
}

.value {
	grid-area: 17 / 16 / 18 / 17;
	padding-right: 3px;
}

.colon {
	grid-area: 17 / 15 / 18 / 16;
	justify-self: center;
	padding-left: 3px;
}

.written {
	grid-area: 21 / 16 / 22 / 17;
	padding-right: 7px;
}

.date {
	grid-area: 21 / 12 / 22 / 15;
	font-size: 14px;
	padding-right: 3px;
	align-self: end;
}

.receiver {
	grid-area: 22 / 5 / 23 / 7;
	font-size: 13px;
	padding-right: 3px;
}

.ask, .yes {
	color: #0000d0;
	font-size: 12.7px;
}

.ask {
	grid-area: 27 / 9 / 28 / 16;
	padding-right: 27px;
}

.yes {
	grid-area: 27 / 9 / 28 / 11;
	padding-right: 14px;
}

.line {
	align-self: end;
	height: 1px;
	background: repeating-linear-gradient(to right, #000000 0 3px, transparent 3px 4px);
}

.line1 { grid-area: 11 / 4 / 12 / 15; }
.line2 { grid-area: 13 / 4 / 14 / 15; }
.line3 { grid-area: 17 / 4 / 18 / 15; }
.line4 { grid-area: 18 / 4 / 19 / 17; }

.line5 {
	grid-area: 24 / 5 / 25 / 8;
	width: 139px;
	margin-left: 1px;
}

.selected {
	grid-area: 22 / 14 / 23 / 15;
	margin: -2px -1px -2px -2px;
	border: 3px solid #000000;
	position: relative;
}

/* fill handle */
.selected::after {
	content: "";
	position: absolute;
	left: -4px;
	bottom: -4px;
	width: 6px;
	height: 6px;
	background-color: #000000;
	border-top: 1px solid #ffffff;
	border-right: 1px solid #ffffff;
}

/* sheet tabs */

.tabbar {
	height: 17px;
	background-color: #f0f0f0;
	border-top: 1px solid #909090;
	border-bottom: 1px solid #d8d8d8;
	display: flex;
	padding-left: 2px;
}

.corner {
	width: 16px;
	height: 16px;
}

.vsplit {
	width: 7px;
	height: 16px;
	border-right: 1px solid #000000;
	border-left: 1px solid #ffffff;
	box-shadow: inset -1px 0 0 #a0a0a0;
}

.hthumb {
	width: 452px;
	background-color: #cdcdcd;
	margin: 0 3px 0 3px;
}

.tabs {
	margin-left: auto;
	width: 170px;
	display: flex;
	position: relative;
}

.tabshape {
	position: absolute;
	left: 0;
	top: 0;
	width: 170px;
	height: 16px;
}

.tab {
	position: relative;
	font: 12.2px/15px "DejaVu Sans", sans-serif;
	text-align: center;
}

.other {
	width: 114px;
	padding-left: 4px;
}

.active {
	width: 50px;
	font: bold 12.4px/15px "DejaVu Sans Condensed", "DejaVu Sans", sans-serif;
}

.tabnav {
	width: 64px;
	height: 16px;
}

.status {
	height: 20px;
	display: flex;
	gap: 1px;
	align-items: flex-end;
	border-top: 1px solid #ffffff;
	padding-bottom: 1px;
}

.status span {
	height: 16px;
	border: 1px solid #d4d4d4;
	width: 26px;
	flex: none;
	text-align: center;
	font-size: 10.500px;
	line-height: 14px;
}

.status .ready {
	width: 968px;
	border: 0;
	text-align: left;
	padding-left: 4px;
	font-size: 11.500px;
}

.status span:nth-child(2) { width: 34px; }
.status span:nth-child(3) { width: 112px; }
.status span:nth-child(5) { width: 30px; }
.status span:nth-child(7) { width: 29px; }
.status span:nth-child(9) { width: 20px; }

/* taskbar */

.taskbar {
	height: 40px;
	display: flex;
	background: linear-gradient(to right, #20303a, #2c3438 370px, #22303a 560px, #22303a 750px, #292e35 880px, #20303a 1000px, #20303a);
}

.task {
	width: 47px;
	height: 40px;
	margin-right: 2px;
	display: flex;
	align-items: center;
	justify-content: center;
}

.task svg {
	width: 17px;
	height: 17px;
}

.task .big {
	width: 22px;
	height: 22px;
}

.task.open {
	position: relative;
}

.task.open::after {
	content: "";
	position: absolute;
	left: 4px;
	right: 4px;
	bottom: 0;
	height: 2px;
	background-color: #76b9ed;
}

.task.focus {
	background: linear-gradient(to right, #4b5961 45px, #3a464e 45px);
}

.task.focus::after {
	left: 0;
	right: 0;
}

.tray {
	margin-left: auto;
	display: flex;
	align-items: center;
	color: #ffffff;
	padding-right: 3px;
	margin-right: 3px;
	border-right: 1px solid #59646b;
}

.trayicon {
	width: 18px;
	height: 18px;
	margin-right: 6px;
}

.lang {
	width: 32px;
	margin-left: 11px;
	font: 11px "DejaVu Sans", sans-serif;
}

.clock {
	direction: rtl;
	width: 54px;
	margin-left: -7px;
	display: flex;
	flex-direction: column;
	align-items: center;
	font: 10.700px/17px "DejaVu Sans", sans-serif;
}

.notify {
	width: 30px;
	height: 30px;
	margin-left: 15px;
	margin-right: 6px;
}

.watermark {
	position: absolute;
	left: 562px;
	top: 940px;
	width: 156px;
	color: #b9bdc0;
	opacity: 0.42;
	display: flex;
	flex-direction: column;
	align-items: center;
}

.brand {
	font: bold 31px/38px "DejaVu Sans", sans-serif;
	height: 38px;
}

.domain {
	font: bold 25px/26px "Liberation Sans", sans-serif;
}
```
